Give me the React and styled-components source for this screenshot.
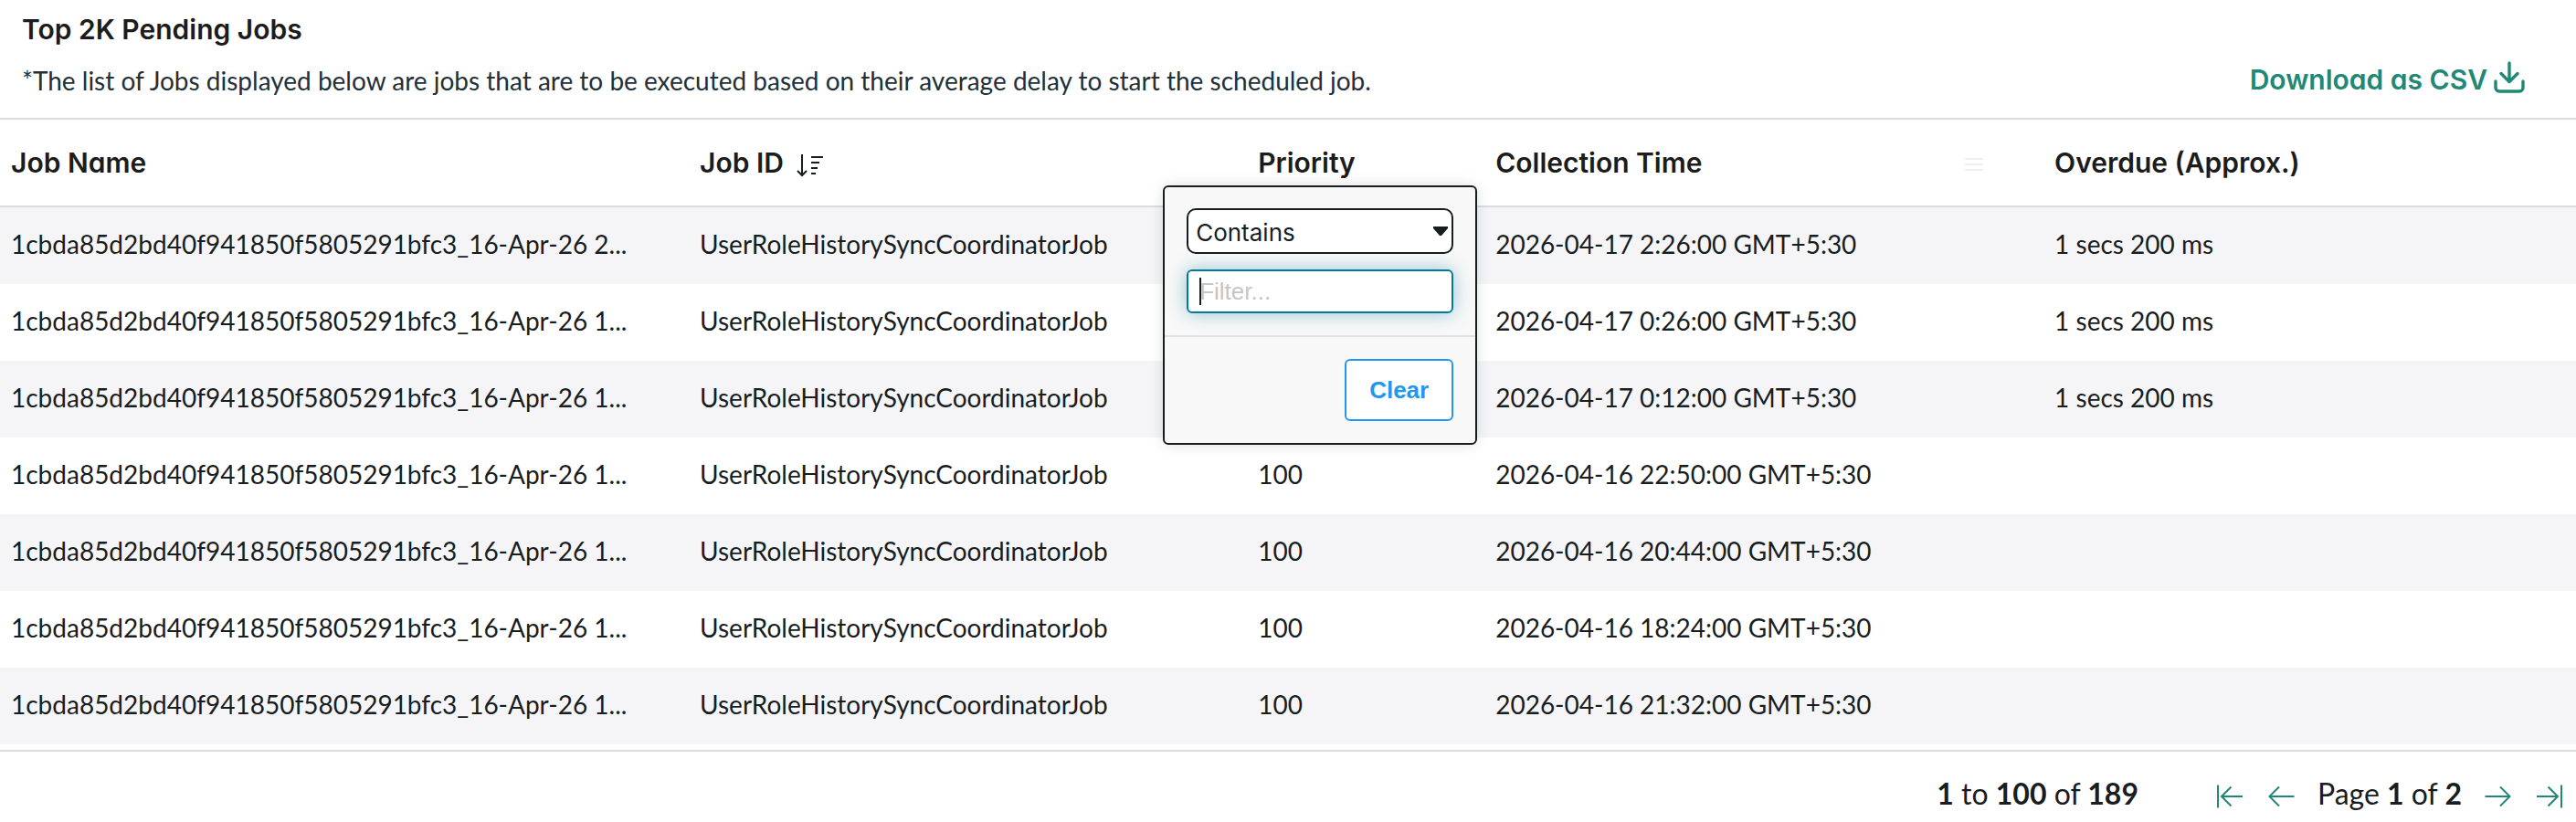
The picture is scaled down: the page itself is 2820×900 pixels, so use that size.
import styled, { createGlobalStyle } from 'styled-components';
import { useState } from 'react';

const GlobalStyle = createGlobalStyle`
    * {
        box-sizing: border-box;
    }
    body {
        margin: 0;
        background: #fff;
        color: #181d1f;
        font-family: Lato, 'Liberation Sans', sans-serif;
        font-size: 28px;
    }
`;

const Top = styled.header`
    display: flex;
    justify-content: space-between;
    align-items: flex-end;
    padding: 12px 55px 21px 24px;
    border-bottom: 2px solid #dbdbe0;
`;
const Title = styled.h1`
    margin: 0 0 16px;
    font-family: Inter, 'Liberation Sans', sans-serif;
    font-feature-settings: 'cv11';
    font-size: 30px;
    line-height: 40px;
    font-weight: 600;
    color: #1c1c1c;
`;
const Note = styled.p`
    margin: 0;
    font-size: 28px;
    line-height: 40px;
    color: #22303a;
`;
const Download = styled.a`
    display: flex;
    align-items: center;
    gap: 6px;
    font-family: Inter, 'Liberation Sans', sans-serif;
    font-feature-settings: 'cv11';
    font-size: 30px;
    line-height: 40px;
    font-weight: 600;
    color: #218876;
    text-decoration: none;
    svg {
        margin-bottom: 6px;
    }
`;

const Grid = styled.table`
    width: 100%;
    table-layout: fixed;
    border-collapse: separate;
    border-spacing: 0;
`;
const Col = styled.col`
    width: ${(p) => p.$w}%;
`;
const HeadCell = styled.th`
    position: relative;
    height: 96px;
    padding: 0 12px;
    border-bottom: 2px solid #dbdbe0;
    text-align: left;
    font-family: Inter, 'Liberation Sans', sans-serif;
    font-feature-settings: 'cv11';
    font-size: 30px;
    font-weight: 600;
    color: #1c1c1c;
`;
const HeadInner = styled.div`
    display: flex;
    align-items: center;
    gap: 12px;
`;
const MenuBtn = styled.button`
    display: flex;
    margin: 0 54px 0 auto;
    padding: 4px 0 0;
    border: 0;
    background: none;
`;
const Row = styled.tr`
    background: #fff;
    &:nth-child(odd) {
        background: #f5f5f8;
    }
`;
const Cell = styled.td`
    height: 84px;
    padding: 0 12px 4px;
    white-space: nowrap;
    overflow: hidden;
`;

const Popup = styled.div`
    position: absolute;
    z-index: 2;
    top: 72px;
    left: -92px;
    width: 344px;
    border: 2px solid #181d1f;
    border-radius: 6px;
    background: #f8f8f8;
    box-shadow: 0 0 16px 0 rgba(0, 0, 0, 0.12);
    font-weight: 400;
`;
const Fields = styled.div`
    display: flex;
    flex-direction: column;
    gap: 17px;
    padding: 23px 24px 24px;
    border-bottom: 2px solid #dde2eb;
`;
const Field = styled.div`
    display: grid;
    align-items: center;
    > * {
        grid-area: 1 / 1;
    }
    svg {
        justify-self: end;
        margin-right: 6px;
        pointer-events: none;
    }
`;
const Select = styled.select`
    appearance: none;
    width: 100%;
    height: 50px;
    padding: 2px 8px 0;
    border: 2px solid #181d1f;
    border-radius: 10px;
    background: #fff;
    color: #181d1f;
    font: 26px Inter, 'Liberation Sans', sans-serif;
`;
const Input = styled.input`
    width: 100%;
    height: 48px;
    padding: 0 12px;
    border: 2px solid #00799b;
    border-radius: 6px;
    outline: none;
    background: #fff;
    color: #181d1f;
    caret-color: transparent;
    font: 26px 'Liberation Sans', Arial, sans-serif;
    box-shadow: 0 0 20px 0 rgba(0, 121, 155, 0.4);
    &::placeholder {
        color: #c4c6c6;
    }
`;
const Caret = styled.span`
    width: 2px;
    height: 30px;
    margin-left: 14px;
    background: #181d1f;
    pointer-events: none;
`;
const Actions = styled.div`
    display: flex;
    justify-content: flex-end;
    padding: 24px;
`;
const ClearBtn = styled.button`
    width: 119px;
    height: 68px;
    border: 2px solid #2196f3;
    border-radius: 6px;
    background: #fff;
    color: #2196f3;
    font: 700 26px 'Liberation Sans', Arial, sans-serif;
`;

const Footer = styled.footer`
    display: flex;
    justify-content: flex-end;
    align-items: center;
    gap: 84px;
    margin-top: 6px;
    padding: 22px 13px 0 0;
    border-top: 2px solid #dbdbe0;
    font-size: 32px;
    line-height: 48px;
`;
const Pager = styled.nav`
    display: flex;
    align-items: center;
    gap: 24px;
`;
const PageBtn = styled.button`
    display: flex;
    padding: 6px 0 0;
    border: 0;
    background: none;
`;

const columns = [
    { name: 'Job Name', w: 26.74 },
    { name: 'Job ID', w: 21.67, sorted: true },
    { name: 'Priority', w: 9.22, filter: true },
    { name: 'Collection Time', w: 21.7, menu: true },
    { name: 'Overdue (Approx.)', w: 20.67 },
];

const prefix = '1cbda85d2bd40f941850f5805291bfc3_16-Apr-26 ';
const jobs = [
    { end: '2...', time: '2026-04-17 2:26:00 GMT+5:30', overdue: '1 secs 200 ms' },
    { end: '1...', time: '2026-04-17 0:26:00 GMT+5:30', overdue: '1 secs 200 ms' },
    { end: '1...', time: '2026-04-17 0:12:00 GMT+5:30', overdue: '1 secs 200 ms' },
    { end: '1...', time: '2026-04-16 22:50:00 GMT+5:30', overdue: '' },
    { end: '1...', time: '2026-04-16 20:44:00 GMT+5:30', overdue: '' },
    { end: '1...', time: '2026-04-16 18:24:00 GMT+5:30', overdue: '' },
    { end: '1...', time: '2026-04-16 21:32:00 GMT+5:30', overdue: '' },
];

const DownloadIcon = () => (
    <svg width="36" height="36" viewBox="0 0 36 36" fill="none" stroke="#218876" strokeWidth="3.400" strokeLinecap="round" strokeLinejoin="round">
        <path d="M18 3v20M9 14.500l9 9 9-9M3 23v7a4 4 0 0 0 4 4h22a4 4 0 0 0 4-4v-7" />
    </svg>
);

const SortIcon = () => (
    <svg width="32" height="32" viewBox="0 0 32 32" fill="none" stroke="#181d1f" strokeWidth="2">
        <path d="M8 7v22M3 25l5 5 5-5M18 10h13M18 16h9M18 22h7M18 28h5" />
    </svg>
);

const MenuIcon = () => (
    <svg width="20" height="16" viewBox="0 0 20 16" stroke="#efefef" strokeWidth="2">
        <path d="M0 2h20M0 8h20M0 14h20" />
    </svg>
);

// right arrows are the left ones mirrored
const ArrowIcon = ({ flip, bar }) => (
    <svg width="32" height="32" viewBox="0 0 32 32" fill="none" stroke="#218876" strokeWidth="2">
        <g transform={flip ? 'matrix(-1 0 0 1 32 0)' : undefined}>
            {bar ? (
                <path d="M3 3.500v25M7.500 16h22.500M17.500 5.500L7 16l10.500 10.500" />
            ) : (
                <path d="M3.500 16h27M14 5.500L3.500 16 14 26.500" />
            )}
        </g>
    </svg>
);

function FilterPopup() {
    const [type, setType] = useState('Contains');
    const [txt, setTxt] = useState('');

    return (
        <Popup>
            <Fields>
                <Field>
                    <Select
                        aria-label="Filter type"
                        value={type}
                        onChange={(e) => {
                            setType(e.target.value);
                        }}
                    >
                        <option>Contains</option>
                        <option>Equals</option>
                    </Select>
                    <svg width="16" height="10" viewBox="0 0 16 10">
                        <path d="M0 0h16v2L9 10H7L0 2z" fill="#181d1f" />
                    </svg>
                </Field>
                <Field>
                    <Input
                        aria-label="Filter value"
                        placeholder="Filter..."
                        value={txt}
                        onChange={(e) => {
                            setTxt(e.target.value);
                        }}
                    />
                    {!txt && <Caret />}
                </Field>
            </Fields>
            <Actions>
                <ClearBtn
                    onClick={() => {
                        setTxt('');
                    }}
                >
                    Clear
                </ClearBtn>
            </Actions>
        </Popup>
    );
}

export default function App() {
    return (
        <>
            <GlobalStyle />
            <Top>
                <div>
                    <Title>Top 2K Pending Jobs</Title>
                    <Note>
                        *The list of Jobs displayed below are jobs that are to be executed based on their average
                        delay to start the scheduled job.
                    </Note>
                </div>
                <Download href="#csv">
                    Download as CSV
                    <DownloadIcon />
                </Download>
            </Top>
            <Grid>
                <colgroup>
                    {columns.map((c) => (
                        <Col key={c.name} $w={c.w} />
                    ))}
                </colgroup>
                <thead>
                    <tr>
                        {columns.map((c) => (
                            <HeadCell key={c.name}>
                                <HeadInner>
                                    {c.name}
                                    {c.sorted && <SortIcon />}
                                    {c.menu && (
                                        <MenuBtn aria-label="Column menu">
                                            <MenuIcon />
                                        </MenuBtn>
                                    )}
                                </HeadInner>
                                {c.filter && <FilterPopup />}
                            </HeadCell>
                        ))}
                    </tr>
                </thead>
                <tbody>
                    {jobs.map((job) => (
                        <Row key={job.time}>
                            <Cell>{prefix + job.end}</Cell>
                            <Cell>UserRoleHistorySyncCoordinatorJob</Cell>
                            <Cell>100</Cell>
                            <Cell>{job.time}</Cell>
                            <Cell>{job.overdue}</Cell>
                        </Row>
                    ))}
                </tbody>
            </Grid>
            <Footer>
                <span>
                    <b>1</b> to <b>100</b> of <b>189</b>
                </span>
                <Pager aria-label="Pages">
                    <PageBtn aria-label="First page">
                        <ArrowIcon bar />
                    </PageBtn>
                    <PageBtn aria-label="Previous page">
                        <ArrowIcon />
                    </PageBtn>
                    <span>
                        Page <b>1</b> of <b>2</b>
                    </span>
                    <PageBtn aria-label="Next page">
                        <ArrowIcon flip />
                    </PageBtn>
                    <PageBtn aria-label="Last page">
                        <ArrowIcon flip bar />
                    </PageBtn>
                </Pager>
            </Footer>
        </>
    );
}
